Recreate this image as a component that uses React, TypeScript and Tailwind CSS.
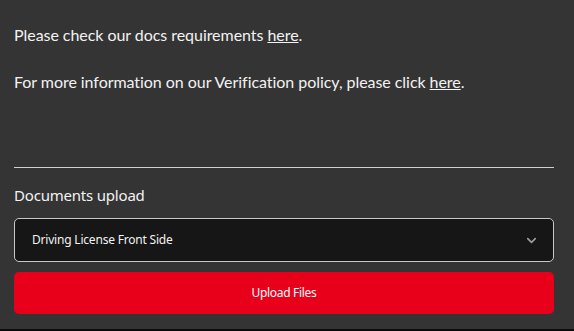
import { ChevronDown } from 'lucide-react';

export default function App() {
  return (
    <div className="min-h-screen bg-[#0c0c0c]">
      <div className="h-[329px] bg-[#343434] pl-[14px] pr-[20px] pt-[23px]">
        <div className="font-['Lato',sans-serif] text-[16px] leading-[24px] tracking-[-0.05px] text-[#f2f2f2]">
          <p>
            Please check our docs requirements <a className="underline">here</a>.
          </p>
          <p className="mt-[23px]">
            For more information on our Verification policy, please click <a className="underline">here</a>.
          </p>
        </div>
        <div className="mt-[73px] h-px bg-[#d0d0d0]" />
        <h2 className="mt-[15px] font-['Noto_Sans',sans-serif] text-[15px] leading-[24px] tracking-[-0.2px] text-[#f2f2f2]">
          Documents upload
        </h2>
        <button
          type="button"
          className="mt-[11px] flex h-[44px] w-full items-center justify-between rounded-[5px] border border-[#c8c8c8] bg-[#161616] pl-[17px] pr-[14px] font-['Noto_Sans',sans-serif] text-[12px] tracking-[-0.2px] text-[#f2f2f2]"
        >
          <span>Driving License Front Side</span>
          <ChevronDown className="h-[15px] w-[15px] text-[#a0a0a0]" strokeWidth={2.5} />
        </button>
        <button
          type="button"
          className="mt-[10px] flex h-[42px] w-full items-center justify-center rounded-[5px] bg-[#e8001b] font-['Noto_Sans',sans-serif] text-[12px] tracking-[-0.3px] text-white"
        >
          Upload Files
        </button>
      </div>
    </div>
  );
}
